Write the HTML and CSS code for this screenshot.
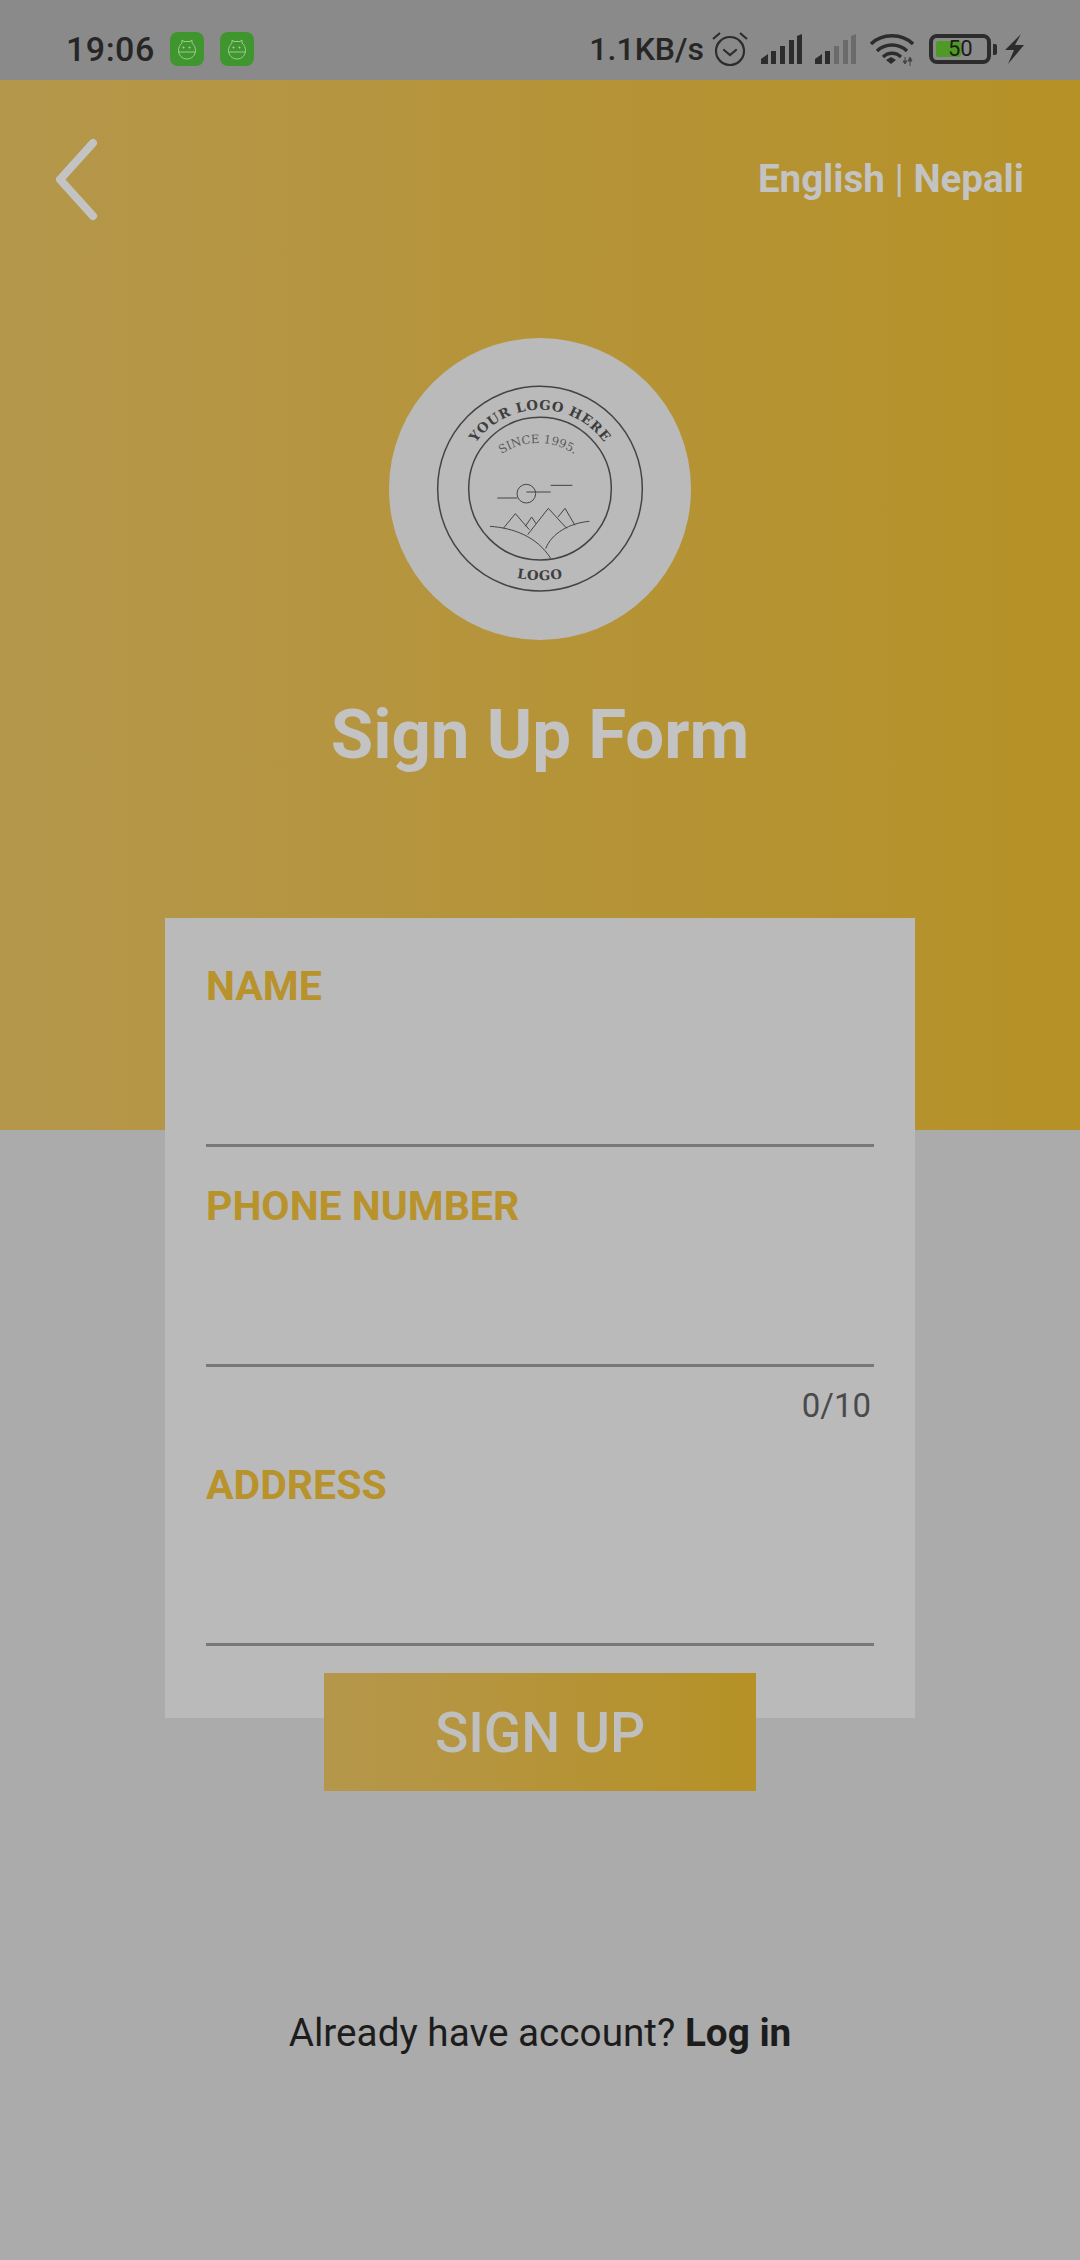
FILE: index.html
```html
<!DOCTYPE html>
<html lang="en">
  <head>
    <meta charset="UTF-8" />
    <title>Sign Up Form</title>
    <link rel="stylesheet" href="styles.css">
  </head>
  <body>
    <div class="statusbar">
      <span class="time">19:06</span>
      <svg class="badge" viewBox="0 0 34 34"><rect width="34" height="34" rx="8" fill="#3f962e"/><g fill="none" stroke="#a9cf9a" stroke-width="0.900"><path d="M12 11 V8 L14 9.500 H20 L22 8 V11 C24.500 13 25.500 16 25.500 18.500 C25.500 23 22 27 17 27 C12 27 8.500 23 8.500 18.500 C8.500 16 9.500 13 12 11 Z"/><path d="M8.500 20 H25.500"/><path d="M12.500 15.500 H14.500 M13.500 14.500 V16.500 M18.500 15.500 H20.500 M19.500 14.500 V16.500"/></g></svg>
      <svg class="badge" viewBox="0 0 34 34"><rect width="34" height="34" rx="8" fill="#3f962e"/><g fill="none" stroke="#a9cf9a" stroke-width="0.900"><path d="M12 11 V8 L14 9.500 H20 L22 8 V11 C24.500 13 25.500 16 25.500 18.500 C25.500 23 22 27 17 27 C12 27 8.500 23 8.500 18.500 C8.500 16 9.500 13 12 11 Z"/><path d="M8.500 20 H25.500"/><path d="M12.500 15.500 H14.500 M13.500 14.500 V16.500 M18.500 15.500 H20.500 M19.500 14.500 V16.500"/></g></svg>
      <div class="status-right">
        <span class="speed">1.1KB/s</span>
        <svg class="alarm" viewBox="0 0 36 36"><g fill="none" stroke="#2c2c2c" stroke-width="2.200"><circle cx="18" cy="20" r="14"/><path d="M12 19 L18 24 L24 19" stroke-linecap="round"/><path d="M1 8 L8 2 M35 8 L28 2"/></g></svg>
        <svg class="signal" viewBox="0 0 41 30"><g fill="#2c2c2c"><path d="M0 30 V25 L7 20 V30 Z"/><rect x="10" y="17" width="5" height="13"/><rect x="19" y="12" width="5" height="18"/><rect x="28" y="6" width="5" height="24" /><path d="M36 2 L41 0 V30 H36 Z"/></g></svg>
        <svg class="signal signal-weak" viewBox="0 0 41 30"><path d="M0 30 V25 L7 20 V30 Z" fill="#2c2c2c"/><rect x="10" y="17" width="5" height="13" fill="#2c2c2c"/><rect x="19" y="12" width="5" height="18" fill="#6b6b6b"/><rect x="28" y="6" width="5" height="24" fill="#6b6b6b"/><path d="M36 2 L41 0 V30 H36 Z" fill="#6b6b6b"/></svg>
        <svg class="wifi" viewBox="0 0 44 33"><g fill="none" stroke="#2c2c2c" stroke-width="3.400"><path d="M1 11 C12 0 32 0 43 11"/><path d="M7 18 C15 10 29 10 37 18"/><path d="M13 24 C18 19 26 19 31 24" /></g><path d="M16 27 L21 24 L26 27 L21 31 Z" fill="#2c2c2c"/><path d="M35 24 V29 M33 28 H37 L35 31 Z M40 33 V27 M38 28 H42 L40 24 Z" fill="#444" stroke="#444" stroke-width="1"/></svg>
        <div class="battery">
          <div class="battery-fill"></div>
          <span class="battery-num">50</span>
        </div>
        <div class="battery-nub"></div>
        <svg class="bolt" viewBox="0 0 19 30"><path d="M16 0 L0 16 H9 L3 30 L19 11 H10 Z" fill="#2c2c2c"/></svg>
      </div>
    </div>

    <div class="hero">
      <div class="hero-top">
        <svg class="back" viewBox="0 0 46 88"><path d="M41 5 L8 41.500 L41 78" fill="none" stroke="#c3c3c3" stroke-width="8" stroke-linecap="round" stroke-linejoin="round"/></svg>
        <div class="lang">English <span class="lang-sep">|</span> Nepali</div>
      </div>

      <div class="logo">
        <svg viewBox="27 25 906 906">
          <defs>
            <path id="arcTop" d="M 243 477 A 237 237 0 0 1 717 477"/>
            <path id="arcSince" d="M 279 535 A 195 195 0 0 1 669 535"/>
            <path id="arcBottom" d="M 390 741 Q 480 761 570 741"/>
          </defs>
          <circle cx="480" cy="477" r="307" class="logo-line-thick"/>
          <circle cx="480" cy="477" r="214" class="logo-line-thick"/>
          <text class="logo-text"><textPath href="#arcTop" startOffset="50%" text-anchor="middle">YOUR LOGO HERE</textPath></text>
          <text class="logo-since"><textPath href="#arcSince" startOffset="50%" text-anchor="middle">SINCE 1995.</textPath></text>
          <text class="logo-text"><textPath href="#arcBottom" startOffset="50%" text-anchor="middle">LOGO</textPath></text>
          <circle cx="439" cy="492" r="28" class="logo-line"/>
          <path class="logo-line" d="M352 505 H412 M439 487 H512 M512 467 H577"/>
          <path class="logo-line" d="M330 590 C400 595 470 620 512 686 M628 575 C570 580 515 610 497 657"/>
          <path class="logo-line" d="M370 596 L406 552 L448 600 M436 590 L455 562 L468 582 M443 615 L505 536 L560 596 M534 562 L555 536 L585 587"/>
        </svg>
      </div>

      <h1 class="title">Sign Up Form</h1>
    </div>

    <form class="card">
      <label class="field">
        <span class="field-label">NAME</span>
        <input class="field-input" type="text" />
      </label>
      <label class="field">
        <span class="field-label">PHONE NUMBER</span>
        <input class="field-input" type="text" />
      </label>
      <div class="counter">0/10</div>
      <label class="field field-address">
        <span class="field-label">ADDRESS</span>
        <input class="field-input" type="text" />
      </label>
    </form>

    <button class="signup" type="button">SIGN UP</button>

    <p class="login">Already have account? <strong>Log in</strong></p>
  </body>
</html>
```

FILE: styles.css
```css
* {
  box-sizing: border-box;
}
body {
  margin: 0;
  width: 1080px;
  height: 2260px;
  overflow: hidden;
  background: #ababab;
  font-family: Roboto, "Liberation Sans", sans-serif;
}

/* status bar */
.statusbar {
  height: 80px;
  background: #8a8a8a;
  display: flex;
  align-items: center;
  padding: 18px 56px 0 66px;
  color: #262626;
}
.time {
  font-size: 34px;
  font-weight: 500;
  letter-spacing: 0.5px;
  margin-right: 15px;
}
.badge {
  width: 34px;
  height: 34px;
  margin-right: 16px;
}
.status-right {
  margin-left: auto;
  display: flex;
  align-items: center;
}
.speed {
  font-size: 32px;
  font-weight: 500;
  margin-right: 8px;
}
.alarm {
  width: 36px;
  height: 36px;
  margin-right: 13px;
}
.signal {
  width: 41px;
  height: 30px;
  margin-right: 13px;
}
.wifi {
  width: 44px;
  height: 33px;
  margin-left: 1px;
  margin-right: 15px;
}
.battery {
  width: 62px;
  height: 30px;
  border: 4px solid #2c2c2c;
  border-radius: 8px;
  padding: 3px;
  display: flex;
  position: relative;
}
.battery-fill {
  width: 25px;
  background: #4f9a26;
  border-radius: 2px;
}
.battery-num {
  position: absolute;
  left: 15px;
  top: -4px;
  font-size: 22px;
  line-height: 30px;
  color: #1c1c1c;
}
.battery-nub {
  width: 4px;
  height: 11px;
  margin-left: 2px;
  margin-right: 8px;
  background: #2c2c2c;
  border-radius: 0 2px 2px 0;
}
.bolt {
  width: 19px;
  height: 30px;
}

/* header */
.hero {
  height: 1050px;
  background: linear-gradient(to right, #b5974c, #b59126);
  overflow: hidden;
}
.hero-top {
  display: flex;
  justify-content: space-between;
  padding: 58px 56px 0 52px;
}
.back {
  width: 46px;
  height: 88px;
}
.lang {
  font-size: 38.500px;
  font-weight: 700;
  color: #c3c3c3;
  line-height: 48px;
  margin-top: 17px;
}
.lang-sep {
  font-weight: 400;
}
.logo {
  width: 302px;
  height: 302px;
  border-radius: 50%;
  background: #bababa;
  margin: 112px auto 0;
}
.logo svg {
  display: block;
  width: 302px;
  height: 302px;
}
.logo-line,
.logo-line-thick {
  fill: none;
  stroke: #444;
  stroke-width: 3;
}
.logo-line-thick {
  stroke-width: 4.500;
}
.logo-text {
  font-family: "DejaVu Serif", serif;
  font-weight: 700;
  font-size: 40px;
  letter-spacing: 2px;
  fill: #3e3e3e;
}
.logo-since {
  font-family: "DejaVu Serif", serif;
  font-size: 35px;
  fill: #5c5c5c;
}
.title {
  margin: 54px 0 0;
  text-align: center;
  font-size: 69px;
  font-weight: 700;
  line-height: 82px;
  color: #c3c3c3;
}

/* form */
.card {
  width: 750px;
  height: 800px;
  margin: -212px auto 0;
  padding: 44px 41px 0;
  background: #bababa;
  position: relative;
}
.field {
  display: block;
  margin-bottom: 35px;
}
.field-label {
  display: block;
  font-size: 41px;
  font-weight: 700;
  line-height: 48px;
  color: #b8922a;
}
.field-input {
  display: block;
  width: 100%;
  height: 137px;
  background: none;
  border: none;
  border-bottom: 3px solid #787878;
  outline: none;
}
.counter {
  margin-top: -35px;
  padding-right: 3px;
  height: 94px;
  padding-top: 19px;
  text-align: right;
  font-size: 33px;
  line-height: 40px;
  color: #4a4a4a;
}
.signup {
  display: block;
  position: relative;
  width: 432px;
  height: 118px;
  margin: -45px auto 0;
  padding-top: 2px;
  border: none;
  background: linear-gradient(to right, #b5974c, #b59126);
  font-family: inherit;
  font-size: 55px;
  font-weight: 500;
  color: #bfbfbf;
}
.login {
  margin: 219px 0 0;
  text-align: center;
  font-size: 38.700px;
  line-height: 46px;
  color: #1c1c1c;
}
```
